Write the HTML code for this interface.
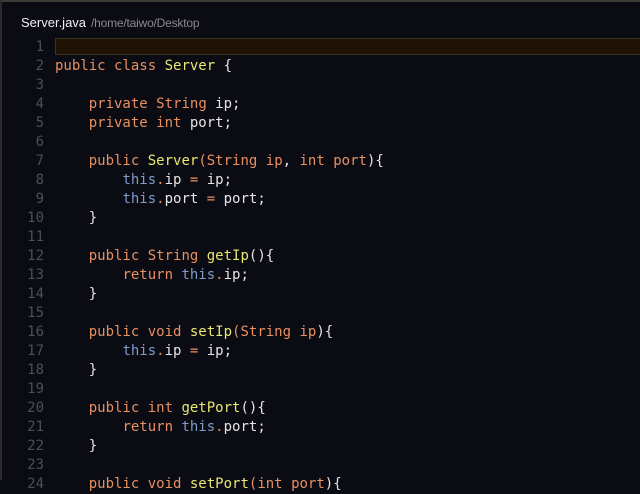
<!DOCTYPE html>
<html><head><style>
html,body{margin:0;padding:0;width:640px;height:480px;overflow:hidden;background:#0b0b14;}
.frame{position:absolute;left:0;top:0;width:638px;height:478px;border-top:2px solid #3a3a36;border-left:2px solid #2a2a2a;}
.title{position:absolute;left:21px;top:15px;font:13px "Liberation Sans",sans-serif;color:#f0f0f0;}
.title span{color:#8a8a8a;font-size:12px;margin-left:5px;letter-spacing:-0.2px}
.hl{position:absolute;left:55px;top:38px;width:590px;height:15px;background:#1f1403;border:1px solid #3b3424;}
.code{position:absolute;left:0;top:38px;font:14px/19px "DejaVu Sans Mono",monospace;color:#e4e4e4;white-space:pre}
.ln{display:inline-block;width:44px;text-align:right;color:#4e4e56;margin-right:11px}
.k{color:#e89060}.t{color:#e8e870}.s{color:#7c9ccc}.p{color:#e89060}
</style></head><body>
<div class="frame"></div>
<div class="title">Server.java<span>/home/taiwo/Desktop</span></div>
<div class="hl"></div>
<div class="code"><span class="ln">1</span>
<span class="ln">2</span><span class="k">public class</span> <span class="t">Server</span> {
<span class="ln">3</span>
<span class="ln">4</span>    <span class="k">private</span> <span class="k">String</span> ip;
<span class="ln">5</span>    <span class="k">private int</span> port;
<span class="ln">6</span>
<span class="ln">7</span>    <span class="k">public</span> <span class="t">Server</span><span class="p">(</span><span class="k">String</span> <span class="k">ip</span>, <span class="k">int</span> <span class="k">port</span>){
<span class="ln">8</span>        <span class="s">this</span><span class="p">.</span>ip <span class="p">=</span> ip;
<span class="ln">9</span>        <span class="s">this</span><span class="p">.</span>port <span class="p">=</span> port;
<span class="ln">10</span>    }
<span class="ln">11</span>
<span class="ln">12</span>    <span class="k">public</span> <span class="k">String</span> <span class="t">getIp</span>(){
<span class="ln">13</span>        <span class="k">return</span> <span class="s">this</span><span class="p">.</span>ip;
<span class="ln">14</span>    }
<span class="ln">15</span>
<span class="ln">16</span>    <span class="k">public void</span> <span class="t">setIp</span><span class="p">(</span><span class="k">String</span> <span class="k">ip</span>){
<span class="ln">17</span>        <span class="s">this</span><span class="p">.</span>ip <span class="p">=</span> ip;
<span class="ln">18</span>    }
<span class="ln">19</span>
<span class="ln">20</span>    <span class="k">public int</span> <span class="t">getPort</span>(){
<span class="ln">21</span>        <span class="k">return</span> <span class="s">this</span><span class="p">.</span>port;
<span class="ln">22</span>    }
<span class="ln">23</span>
<span class="ln">24</span>    <span class="k">public void</span> <span class="t">setPort</span><span class="p">(</span><span class="k">int</span> <span class="k">port</span>){
</div>
</body></html>
